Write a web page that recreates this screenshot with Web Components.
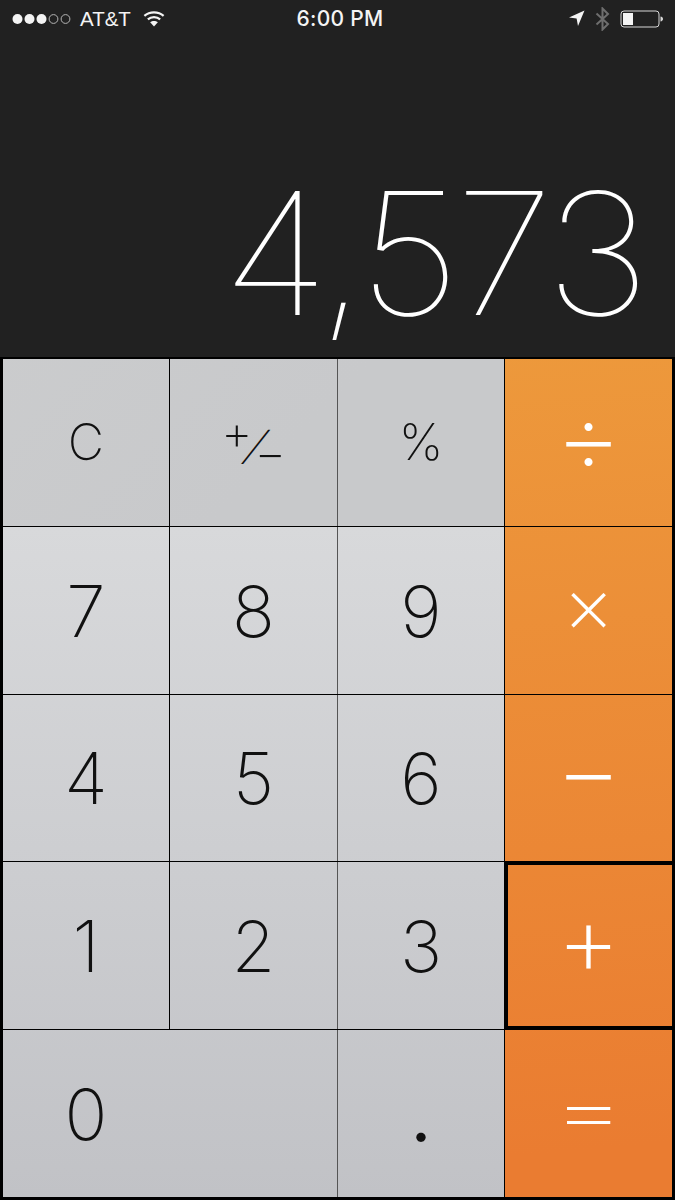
<!DOCTYPE html>
<html>
<head>
<meta charset="utf-8">
<title>Calculator</title>
<style>
html,body{margin:0;padding:0;background:#212121;}
</style>
</head>
<body>
<calc-app>
  <status-bar slot="status"></status-bar>
  <calc-display slot="display">4,573</calc-display>
  <calc-keypad slot="keypad">
    <calc-key kind="top" size="small">C</calc-key>
    <calc-key kind="top"><sign-label></sign-label></calc-key>
    <calc-key kind="top" size="small" seam>%</calc-key>
    <calc-key kind="op" style="font-size:104px">÷</calc-key>
    <calc-key>7</calc-key>
    <calc-key>8</calc-key>
    <calc-key seam>9</calc-key>
    <calc-key kind="op" style="font-size:80px;padding-bottom:12px">×</calc-key>
    <calc-key>4</calc-key>
    <calc-key>5</calc-key>
    <calc-key seam>6</calc-key>
    <calc-key kind="op" style="font-size:104px;padding-bottom:17px">−</calc-key>
    <calc-key>1</calc-key>
    <calc-key>2</calc-key>
    <calc-key seam>3</calc-key>
    <calc-key kind="op" selected style="font-size:100px">+</calc-key>
    <calc-key wide>0</calc-key>
    <calc-key seam style="font-weight:400;padding-top:5px">.</calc-key>
    <calc-key kind="op" style="--sx:1.26;--sy:.76;padding-bottom:8px">=</calc-key>
  </calc-keypad>
</calc-app>

<script>
class CalcApp extends HTMLElement {
    constructor(){
        super();
        this.attachShadow({mode:"open"});
        this.shadowRoot.innerHTML = `
        <style>
        :host{
            display:flex;
            flex-direction:column;
            width:675px;
            height:1200px;
            background:#212121;
            font-family:Inter,"Liberation Sans",sans-serif;
            overflow:hidden;
        }
        </style>
        <slot name="status"></slot>
        <slot name="display"></slot>
        <slot name="keypad"></slot>
        `;
    }
}

class StatusBar extends HTMLElement {
    constructor(){
        super();
        this.attachShadow({mode:"open"});
        this.shadowRoot.innerHTML = `
        <style>
        :host{
            display:grid;
            grid-template-columns:1fr auto 1fr;
            align-items:center;
            height:37px;
            padding:0 12px;
            color:#f4f4f4;
            font:400 20.500px "Liberation Sans",Inter,sans-serif;
        }
        .left,.right{display:flex;align-items:center;}
        .right{justify-content:flex-end;}
        .time{font:500 21px Inter,sans-serif;letter-spacing:.3px;margin-left:5px;}
        .carrier{margin:0 12px 0 8px;}
        svg{display:block;}
        </style>
        <div class="left">
            <svg width="60" height="12" viewBox="0 0 60 12">
                <circle cx="5.5" cy="6" r="5" fill="#f4f4f4"/>
                <circle cx="17.5" cy="6" r="5" fill="#f4f4f4"/>
                <circle cx="29.5" cy="6" r="5" fill="#f4f4f4"/>
                <circle cx="41.5" cy="6" r="4.4" fill="none" stroke="#b5b5b5" stroke-width="1"/>
                <circle cx="53.5" cy="6" r="4.4" fill="none" stroke="#b5b5b5" stroke-width="1"/>
            </svg>
            <span class="carrier">AT&amp;T</span>
            <svg width="22" height="17" viewBox="0 0 24 18" fill="none" stroke="#f4f4f4" stroke-width="2.4">
                <path d="M1.5 6.2C7.3 1 16.7 1 22.5 6.2"/>
                <path d="M5.3 10C9 6.7 15 6.7 18.7 10"/>
                <path fill="#f4f4f4" stroke="none" d="M12 17.6 7.8 13.2C10.2 11.2 13.8 11.2 16.2 13.2Z"/>
            </svg>
        </div>
        <div class="time">6:00 PM</div>
        <div class="right">
            <svg width="17" height="17" viewBox="0 0 17 17" style="margin-right:10px">
                <path fill="#f4f4f4" d="M16.5 .5 1 7.6 8.6 8.6 10 16Z"/>
            </svg>
            <svg width="15" height="24" viewBox="0 0 15 24" fill="none" stroke="#6e6e6e" stroke-width="2" style="margin-right:10px">
                <path d="M1.5 6.5 13 17 7.5 22.5V1.5L13 7 1.5 17.5"/>
            </svg>
            <svg width="43" height="18" viewBox="0 0 43 18">
                <rect x="1" y="1" width="38" height="16" rx="3" fill="none" stroke="#d8d8d8" stroke-width="1"/>
                <rect x="3" y="3" width="10" height="12" fill="#f4f4f4"/>
                <path fill="#d8d8d8" d="M40.500 6.500c1.500 .3 2.500 1.200 2.500 2.500s-1 2.200-2.500 2.500Z"/>
            </svg>
        </div>
        `;
    }
}

class CalcDisplay extends HTMLElement {
    constructor(){
        super();
        this.attachShadow({mode:"open"});
        this.shadowRoot.innerHTML = `
        <style>
        :host{
            display:flex;
            justify-content:flex-end;
            align-items:flex-end;
            height:320px;
            box-sizing:border-box;
            padding:0 30px 19px 0;
            color:#fff;
            font-family:Inter,sans-serif;
            font-weight:100;
            font-size:170px;
            line-height:1;
            letter-spacing:-5px;
        }
        /* the original digits are a bit wider than Inter */
        .num{display:block;transform:scaleX(1.06);transform-origin:right;}
        </style>
        <span class="num"><slot></slot></span>
        `;
    }
}

class CalcKeypad extends HTMLElement {
    constructor(){
        super();
        this.attachShadow({mode:"open"});
        this.shadowRoot.innerHTML = `
        <style>
        :host{
            display:grid;
            grid-template-columns:166px 167px 166px 167px;
            grid-template-rows:repeat(5,1fr);
            gap:1px;
            height:843px;
            box-sizing:border-box;
            padding:2px 3px 3px;
            background:#000;
        }
        </style>
        <slot></slot>
        `;
    }
}

class CalcKey extends HTMLElement {
    constructor(){
        super();
        this.attachShadow({mode:"open"});
        this.shadowRoot.innerHTML = `
        <style>
        :host{
            display:flex;
            align-items:center;
            justify-content:center;
            box-sizing:border-box;
            min-width:0;
            min-height:0;
            padding-top:2px;
            color:#111;
            font-family:Inter,sans-serif;
            font-weight:150;
            font-size:71px;
            line-height:1;
            background:linear-gradient(180deg,#d8d9db 527px,#c1c2c6 1197px) fixed;
        }
        :host([kind="top"]){
            padding-top:0;
            background:linear-gradient(135deg,#cdcecf 0,#c8c9cb 520px) fixed;
        }
        :host([size="small"]){font-size:50px;}
        :host([seam]){box-shadow:-1px 0 0 #555;}
        :host([kind="op"]){
            color:#fff;
            font-weight:200;
            font-size:92px;
            padding-top:0;
            padding-bottom:13px;
            background:linear-gradient(175deg,#ed9a3c 360px,#ea7c31 1197px) fixed;
        }
        :host([selected]){
            border:solid #000;
            border-width:3px 0 3px 3px;
            padding-right:3px;
        }
        :host([wide]){
            grid-column:span 2;
            justify-content:flex-start;
        }
        :host([wide]) .label{width:calc(50% - 1px);text-align:center;}
        .label{display:block;transform:scale(var(--sx,1),var(--sy,1));}
        </style>
        <span class="label"><slot></slot></span>
        `;
    }
}

class SignLabel extends HTMLElement {
    constructor(){
        super();
        this.attachShadow({mode:"open"});
        this.shadowRoot.innerHTML = `
        <style>
        :host{
            display:flex;
            align-items:center;
            font-size:49px;
            line-height:1;
        }
        .plus{letter-spacing:-1px;margin-bottom:19px;}
        .slash{width:3px;font-size:47px;font-weight:250;margin-top:8px;transform:skewX(-6deg);}
        .minus{margin-top:20px;}
        </style>
        <span class="plus">+</span><span class="slash">⁄</span><span class="minus">−</span>
        `;
    }
}

customElements.define("calc-app", CalcApp);
customElements.define("status-bar", StatusBar);
customElements.define("calc-display", CalcDisplay);
customElements.define("calc-keypad", CalcKeypad);
customElements.define("calc-key", CalcKey);
customElements.define("sign-label", SignLabel);
</script>
</body>
</html>
